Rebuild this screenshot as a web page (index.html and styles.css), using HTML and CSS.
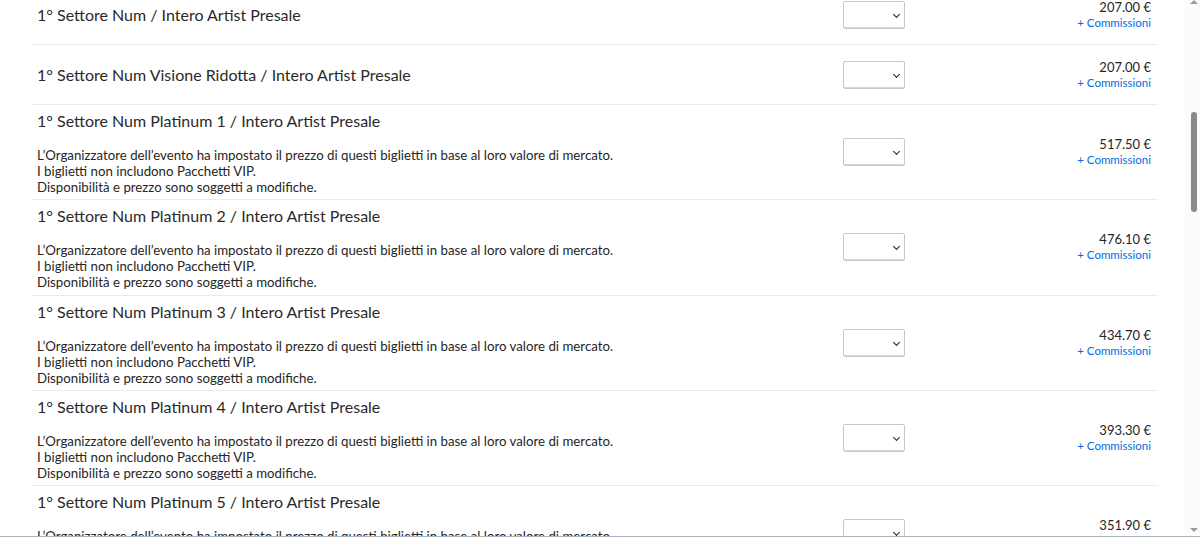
FILE: index.html
```html
<!DOCTYPE html>
<html lang="it">
<head>
<meta charset="utf-8">
<title>Biglietti</title>
<link rel="stylesheet" href="styles.css">
</head>
<body>
<div class="viewport">
  <div class="list">
    <div class="row simple">
      <div class="info"><div class="title">1° Settore Num / Intero Artist Presale</div></div>
      <div class="qty"><div class="select"><span class="chev"></span></div></div>
      <div class="price"><div class="amount">207.00 €</div><a class="fees">+ Commissioni</a></div>
    </div>
    <div class="row simple">
      <div class="info"><div class="title">1° Settore Num Visione Ridotta / Intero Artist Presale</div></div>
      <div class="qty"><div class="select"><span class="chev"></span></div></div>
      <div class="price"><div class="amount">207.00 €</div><a class="fees">+ Commissioni</a></div>
    </div>
    <div class="row">
      <div class="info">
        <div class="title">1° Settore Num Platinum 1 / Intero Artist Presale</div>
        <p class="desc">L’Organizzatore dell’evento ha impostato il prezzo di questi biglietti in base al loro valore di mercato.<br>I biglietti non includono Pacchetti VIP.<br>Disponibilità e prezzo sono soggetti a modifiche.</p>
      </div>
      <div class="qty"><div class="select"><span class="chev"></span></div></div>
      <div class="price"><div class="amount">517.50 €</div><a class="fees">+ Commissioni</a></div>
    </div>
    <div class="row">
      <div class="info">
        <div class="title">1° Settore Num Platinum 2 / Intero Artist Presale</div>
        <p class="desc">L’Organizzatore dell’evento ha impostato il prezzo di questi biglietti in base al loro valore di mercato.<br>I biglietti non includono Pacchetti VIP.<br>Disponibilità e prezzo sono soggetti a modifiche.</p>
      </div>
      <div class="qty"><div class="select"><span class="chev"></span></div></div>
      <div class="price"><div class="amount">476.10 €</div><a class="fees">+ Commissioni</a></div>
    </div>
    <div class="row">
      <div class="info">
        <div class="title">1° Settore Num Platinum 3 / Intero Artist Presale</div>
        <p class="desc">L’Organizzatore dell’evento ha impostato il prezzo di questi biglietti in base al loro valore di mercato.<br>I biglietti non includono Pacchetti VIP.<br>Disponibilità e prezzo sono soggetti a modifiche.</p>
      </div>
      <div class="qty"><div class="select"><span class="chev"></span></div></div>
      <div class="price"><div class="amount">434.70 €</div><a class="fees">+ Commissioni</a></div>
    </div>
    <div class="row">
      <div class="info">
        <div class="title">1° Settore Num Platinum 4 / Intero Artist Presale</div>
        <p class="desc">L’Organizzatore dell’evento ha impostato il prezzo di questi biglietti in base al loro valore di mercato.<br>I biglietti non includono Pacchetti VIP.<br>Disponibilità e prezzo sono soggetti a modifiche.</p>
      </div>
      <div class="qty"><div class="select"><span class="chev"></span></div></div>
      <div class="price"><div class="amount">393.30 €</div><a class="fees">+ Commissioni</a></div>
    </div>
    <div class="row">
      <div class="info">
        <div class="title">1° Settore Num Platinum 5 / Intero Artist Presale</div>
        <p class="desc">L’Organizzatore dell’evento ha impostato il prezzo di questi biglietti in base al loro valore di mercato.<br>I biglietti non includono Pacchetti VIP.<br>Disponibilità e prezzo sono soggetti a modifiche.</p>
      </div>
      <div class="qty"><div class="select"><span class="chev"></span></div></div>
      <div class="price"><div class="amount">351.90 €</div><a class="fees">+ Commissioni</a></div>
    </div>
  </div>
  <div class="scrollbar">
    <span class="arrow up"></span>
    <span class="thumb"></span>
    <span class="arrow down"></span>
  </div>
  <div class="footer-edge"></div>
</div>
</body>
</html>
```
FILE: styles.css
```css
* { box-sizing: border-box; }
html, body { margin: 0; padding: 0; background: #fff; }
body {
  font-family: Lato, "Open Sans", "Liberation Sans", sans-serif;
  color: #262626;
}
.viewport {
  position: relative;
  width: 1200px;
  height: 539px;
  overflow: hidden;
}
.list {
  margin: -15px 0 0 32px;
  width: 1126px;
}
.row {
  display: flex;
  align-items: center;
  border-bottom: 1px solid #ebebeb;
  height: 95.25px;
  padding: 0 7px 0 5px;
}
.row.simple { height: 60px; }
.info {
  flex: 1;
  align-self: stretch;
  display: flex;
  flex-direction: column;
  justify-content: center;
}
.row:not(.simple) .info { justify-content: flex-start; padding-top: 4px; }
.title {
  font-size: 16px;
  line-height: 24px;
  color: #2a2a2a;
}
.desc {
  margin: 14px 0 0;
  font-size: 13.25px;
  line-height: 16px;
  color: #262626;
}
.qty { width: 188px; display: flex; }
.select {
  position: relative;
  width: 62px;
  height: 28px;
  border: 1px solid #c8c8c8;
  border-radius: 2px;
  background: #fff;
  box-shadow: inset 0 -1px 0 #d6d6d6;
}
.chev {
  position: absolute;
  right: 5px;
  top: 10px;
  width: 5px;
  height: 5px;
  border-right: 1.6px solid #222;
  border-bottom: 1.6px solid #222;
  transform: rotate(45deg);
}
.price {
  width: 120px;
  display: flex;
  flex-direction: column;
  align-items: flex-end;
}
.amount { font-size: 13px; line-height: 16px; }
.fees { font-size: 11.5px; line-height: 16px; color: #026cdf; }
.scrollbar {
  position: absolute;
  top: 0;
  right: 0;
  width: 15px;
  height: 539px;
  background: #fbfbfb;
}
.thumb {
  position: absolute;
  left: 6px;
  top: 112px;
  width: 6px;
  height: 100px;
  border-radius: 3px;
  background: #8a8a8a;
}
.arrow {
  position: absolute;
  left: 5px;
  width: 0;
  height: 0;
  border-left: 4px solid transparent;
  border-right: 4px solid transparent;
}
.arrow.up { top: 0; border-bottom: 4px solid #9a9a9a; }
.arrow.down { bottom: 7px; border-top: 4px solid #9a9a9a; }
.footer-edge {
  position: absolute;
  left: 0;
  right: 0;
  bottom: 0;
  height: 3px;
  border-top: 1px solid #aab4be;
  background: #fff;
}
```
